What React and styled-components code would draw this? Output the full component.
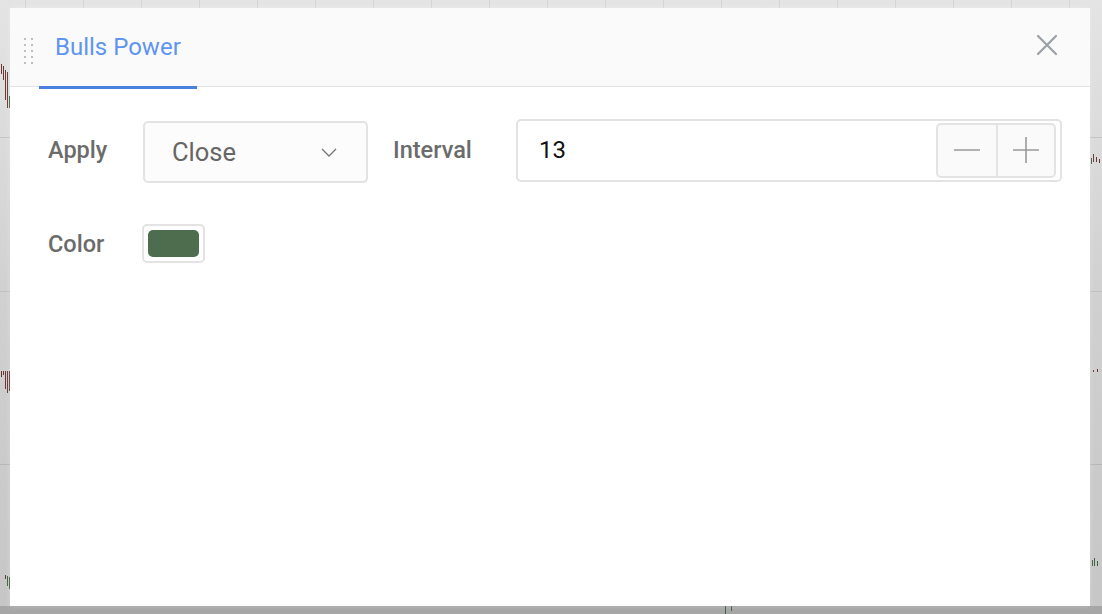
import React from "react";
import styled, { createGlobalStyle } from "styled-components";

const GlobalStyle = createGlobalStyle`
  html, body {
    margin: 0;
    padding: 0;
  }
  body {
    font-family: Roboto, "Liberation Sans", Arial, sans-serif;
    -webkit-font-smoothing: antialiased;
  }
`;

const Backdrop = styled.div`
  position: relative;
  width: 1102px;
  height: 614px;
  box-sizing: border-box;
  padding: 8px 12px 8px 10px;
  overflow: hidden;
  background-color: #c8c8c8;
  box-shadow: inset 0 -8px 0 #a6a6a6;
  background-image:
    linear-gradient(180deg, transparent 137px, rgba(0, 0, 0, 0.1) 137px, rgba(0, 0, 0, 0.1) 138px, transparent 138px),
    linear-gradient(180deg, transparent 291px, rgba(0, 0, 0, 0.08) 291px, rgba(0, 0, 0, 0.08) 292px, transparent 292px),
    linear-gradient(180deg, transparent 464px, rgba(0, 0, 0, 0.1) 464px, rgba(0, 0, 0, 0.1) 465px, transparent 465px),
    repeating-linear-gradient(90deg, transparent 0, transparent 25px, rgba(0, 0, 0, 0.07) 25px, rgba(0, 0, 0, 0.07) 26px, transparent 26px, transparent 58px),
    linear-gradient(180deg, #e4e4e4 0, #d0d0d0 300px, #c6c6c6 100%);
`;

const Candle = styled.span`
  position: absolute;
  width: 1px;
  background: ${(p) => (p.$up ? "#3f5e3f" : "#6a3434")};
`;

const Dialog = styled.div`
  position: relative;
  width: 1080px;
  height: 598px;
  background: #fff;
  display: flex;
  flex-direction: column;
  box-shadow: 0 0 6px rgba(255, 255, 255, 0.25);
`;

const Header = styled.div`
  height: 78px;
  display: flex;
  align-items: stretch;
  padding: 0 32px 0 14px;
  background: #fafafa;
  border-bottom: 1px solid #e2e2e2;
`;

const Handle = styled.div`
  align-self: center;
  display: grid;
  grid-template-columns: repeat(2, 2px);
  grid-auto-rows: 2px;
  column-gap: 5px;
  row-gap: 4px;
  margin-top: 8px;

  span {
    background: #bdbdbd;
  }
`;

const Tab = styled.div`
  position: relative;
  display: flex;
  align-items: center;
  margin-left: 6px;
  padding: 0 16px;
  font-size: 24px;
  color: #5f95ef;

  &::after {
    content: "";
    position: absolute;
    left: 0;
    right: 0;
    bottom: -3px;
    height: 3px;
    background: #4a7fe0;
  }
`;

const CloseButton = styled.button`
  margin-left: auto;
  align-self: center;
  border: none;
  background: none;
  padding: 0;
  width: 22px;
  height: 22px;
  cursor: pointer;
  display: flex;
  align-items: center;
  justify-content: center;
  margin-top: -4px;
`;

const Body = styled.div`
  display: flex;
  flex-direction: column;
  gap: 41px;
  padding: 30px 28px 0 38px;
`;

const Row = styled.div`
  display: flex;
  align-items: center;
`;

const Label = styled.div`
  width: ${(p) => p.$width}px;
  flex-shrink: 0;
  font-size: 23.5px;
  font-weight: 500;
  color: #6b6b6b;
`;

const Select = styled.div`
  width: 225px;
  height: 62px;
  box-sizing: border-box;
  border: 2px solid #e3e3e3;
  border-radius: 5px;
  background: #fcfcfc;
  display: flex;
  align-items: center;
  justify-content: space-between;
  padding: 0 29px 0 27px;
  margin-right: 25px;
  font-size: 25.5px;
  color: #666;
  margin-top: 4px;
`;

const Input = styled.div`
  flex: 1;
  height: 63px;
  box-sizing: border-box;
  border: 2px solid #e3e3e3;
  border-radius: 5px;
  display: flex;
  align-items: center;
  padding: 0 4px 0 21px;
  font-size: 24px;
  color: #111;
`;

const Stepper = styled.div`
  margin-left: auto;
  display: flex;
  height: 51px;
  border: 2px solid #e3e3e3;
  border-radius: 5px;
  background: #fafafa;
  overflow: hidden;
`;

const StepButton = styled.button`
  width: 58px;
  border: none;
  background: none;
  padding: 0;
  display: flex;
  align-items: center;
  justify-content: center;
  cursor: pointer;

  & + & {
    border-left: 2px solid #e3e3e3;
  }
`;

const Swatch = styled.div`
  width: 63px;
  height: 39px;
  box-sizing: border-box;
  border: 2px solid #e3e3e3;
  border-radius: 5px;
  padding: 4px;
  background: #fff;

  span {
    display: block;
    height: 100%;
    border-radius: 5px;
    background: ${(p) => p.$color};
  }
`;

const candles = [
  { x: 1, y: 64, h: 10 }, { x: 3, y: 66, h: 14 }, { x: 5, y: 70, h: 30 },
  { x: 7, y: 72, h: 36 }, { x: 9, y: 96, h: 12, up: true },
  { x: 1, y: 371, h: 6 }, { x: 3, y: 371, h: 4 }, { x: 5, y: 371, h: 18 },
  { x: 7, y: 371, h: 22 }, { x: 9, y: 371, h: 20 },
  { x: 5, y: 575, h: 4 }, { x: 7, y: 576, h: 10, up: true }, { x: 9, y: 577, h: 12, up: true },
  { x: 1091, y: 158, h: 6, up: true }, { x: 1093, y: 154, h: 8 }, { x: 1096, y: 157, h: 5 },
  { x: 1099, y: 159, h: 4 }, { x: 1093, y: 370, h: 2 }, { x: 1097, y: 369, h: 3 },
  { x: 1092, y: 560, h: 6, up: true }, { x: 1094, y: 558, h: 8, up: true }, { x: 1097, y: 561, h: 5, up: true },
  { x: 725, y: 606, h: 8, up: true }, { x: 731, y: 606, h: 5, up: true },
];

const CloseIcon = () => (
  <svg width="22" height="22" viewBox="0 0 22 22">
    <path d="M2 2 L20 20 M20 2 L2 20" stroke="#9aa0a6" strokeWidth="2.2" strokeLinecap="round" />
  </svg>
);

const Chevron = () => (
  <svg width="16" height="9" viewBox="0 0 16 9">
    <path d="M1 1 L8 8 L15 1" fill="none" stroke="#777" strokeWidth="1.3" />
  </svg>
);

const MinusIcon = () => (
  <svg width="26" height="26" viewBox="0 0 26 26">
    <path d="M0 13 H26" stroke="#999" strokeWidth="1.6" />
  </svg>
);

const PlusIcon = () => (
  <svg width="26" height="26" viewBox="0 0 26 26">
    <path d="M0 13 H26 M13 0 V26" stroke="#999" strokeWidth="1.6" />
  </svg>
);

export default function App() {
  return (
    <>
      <GlobalStyle />
      <Backdrop>
        {candles.map((c, i) => (
          <Candle key={i} $up={c.up} style={{ left: c.x, top: c.y, height: c.h }} />
        ))}
        <Dialog>
          <Header>
            <Handle>
              {Array.from({ length: 10 }).map((_, i) => (
                <span key={i} />
              ))}
            </Handle>
            <Tab>Bulls Power</Tab>
            <CloseButton aria-label="Close">
              <CloseIcon />
            </CloseButton>
          </Header>
          <Body>
            <Row>
              <Label $width={95}>Apply</Label>
              <Select>
                <span>Close</span>
                <Chevron />
              </Select>
              <Label $width={123}>Interval</Label>
              <Input>
                <span>13</span>
                <Stepper>
                  <StepButton aria-label="Decrease">
                    <MinusIcon />
                  </StepButton>
                  <StepButton aria-label="Increase">
                    <PlusIcon />
                  </StepButton>
                </Stepper>
              </Input>
            </Row>
            <Row>
              <Label $width={94}>Color</Label>
              <Swatch $color="#4e6d4e">
                <span />
              </Swatch>
            </Row>
          </Body>
        </Dialog>
      </Backdrop>
    </>
  );
}
